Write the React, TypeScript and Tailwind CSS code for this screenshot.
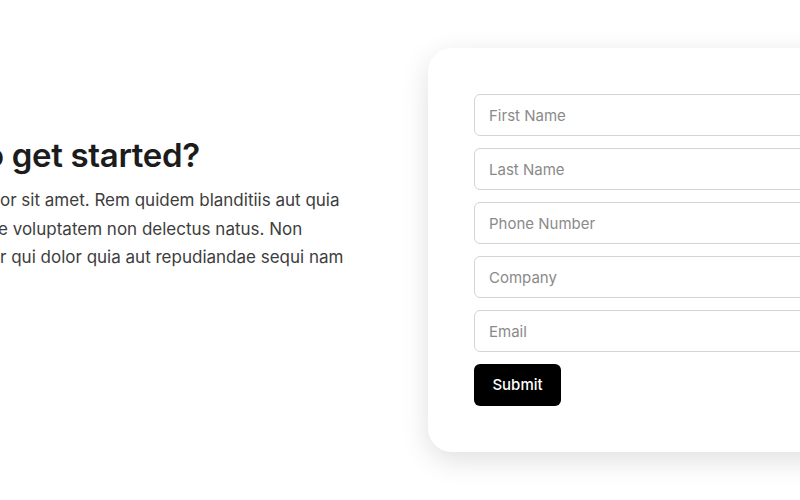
import * as React from "react";

const fields = ["First Name", "Last Name", "Phone Number", "Company", "Email"];

const lines: [string, string, string][] = [
	["w-[137px]", "Lorem ipsum dol", "or sit amet. Rem quidem blanditiis aut quia"],
	["w-[135px]", "earum molestia", "e voluptatem non delectus natus. Non"],
	["w-[137px]", "quas et tempo", "r qui dolor quia aut repudiandae sequi nam"],
];

export default function App() {
	return (
		<div className="w-[800px] h-[500px] overflow-hidden bg-white font-['Inter','Liberation_Sans',sans-serif]">
			<div className="flex items-start gap-[74px] w-[1400px] ml-[-137px] pt-12">
				<div className="w-[491px] shrink-0 pt-[86px]">
					<h1 className="flex whitespace-nowrap text-[33px] leading-[42px] font-semibold tracking-[-0.01em] text-[#1c1c1c]">
						<span className="w-[121px] shrink-0 overflow-hidden text-right">Ready t</span>
						<span>o get started?</span>
					</h1>
					<div className="mt-[10px] text-[17px] leading-[28.5px] text-[#3d3d3d]">
						{lines.map(([w, pre, rest]) => (
							<p key={rest} className="flex whitespace-nowrap">
								<span className={`${w} shrink-0 overflow-hidden flex justify-end`}>{pre}</span>
								<span>{rest}</span>
							</p>
						))}
					</div>
				</div>
				<div className="w-[520px] shrink-0 rounded-[24px] bg-white p-[46px] shadow-[0_8px_28px_rgba(0,0,0,0.13)]">
					<form className="flex flex-col gap-3">
						{fields.map((f) => (
							<input
								key={f}
								type="text"
								placeholder={f}
								className="h-[42px] w-full rounded-md border border-[#d4d4d4] bg-white px-[14px] text-[15px] text-[#222] placeholder:text-[#8a8a8a] outline-none"
							/>
						))}
						<div>
							<button
								type="button"
								className="h-[42px] w-[87px] rounded-md bg-black text-[15px] font-medium text-white"
							>
								Submit
							</button>
						</div>
					</form>
				</div>
			</div>
		</div>
	);
}
